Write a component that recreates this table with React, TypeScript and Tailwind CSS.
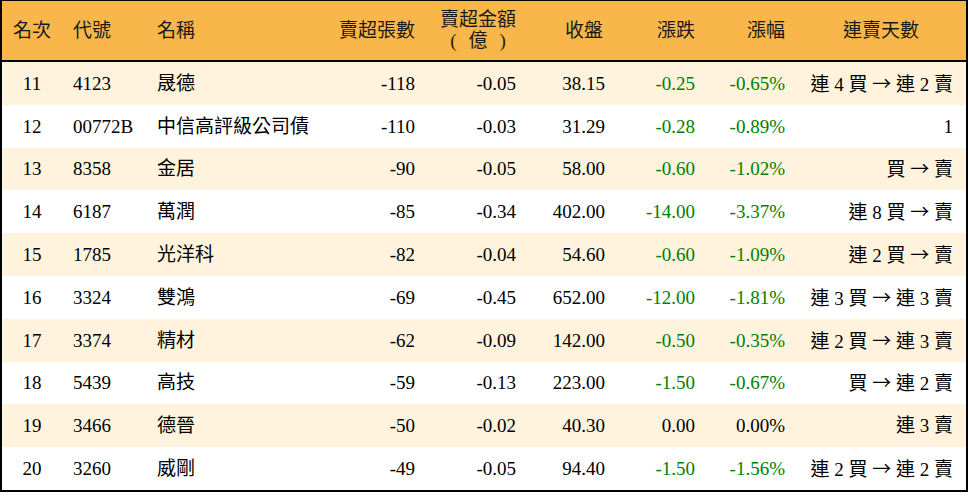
const rows = [
    ["11", "4123", "晟德", "-118", "-0.05", "38.15", "-0.25", "-0.65%", "連 4 買 → 連 2 賣"],
    ["12", "00772B", "中信高評級公司債", "-110", "-0.03", "31.29", "-0.28", "-0.89%", "1"],
    ["13", "8358", "金居", "-90", "-0.05", "58.00", "-0.60", "-1.02%", "買 → 賣"],
    ["14", "6187", "萬潤", "-85", "-0.34", "402.00", "-14.00", "-3.37%", "連 8 買 → 賣"],
    ["15", "1785", "光洋科", "-82", "-0.04", "54.60", "-0.60", "-1.09%", "連 2 買 → 賣"],
    ["16", "3324", "雙鴻", "-69", "-0.45", "652.00", "-12.00", "-1.81%", "連 3 買 → 連 3 賣"],
    ["17", "3374", "精材", "-62", "-0.09", "142.00", "-0.50", "-0.35%", "連 2 買 → 連 3 賣"],
    ["18", "5439", "高技", "-59", "-0.13", "223.00", "-1.50", "-0.67%", "買 → 連 2 賣"],
    ["19", "3466", "德晉", "-50", "-0.02", "40.30", "0.00", "0.00%", "連 3 賣"],
    ["20", "3260", "威剛", "-49", "-0.05", "94.40", "-1.50", "-1.56%", "連 2 買 → 連 2 賣"],
];

const grid =
    "grid grid-cols-[60px_84px_184px_96px_101px_89px_90px_90px_170px]";

const cjk = { fontFamily: '"Noto Sans CJK TC", sans-serif' };

const changeColor = (v: string) =>
    v.startsWith("-") ? "text-[#008000]" : "text-black";

// the arrow is drawn from the CJK font so it is full width, like the reference
function Streak({ text }: { text: string }) {
    const parts = text.split("→");
    return (
        <>
            {parts.map((p, i) => (
                <span key={i}>
                    {i > 0 && <span style={cjk}>→</span>}
                    {p}
                </span>
            ))}
        </>
    );
}

export default function App() {
    return (
        <div
            className="w-[968px] h-[496px] bg-white text-[19px] leading-none text-black"
            style={{ fontFamily: '"Liberation Serif", "Noto Sans CJK TC", serif' }}
        >
            <div className="w-[968px] border-l-2 border-r-2 border-t border-b-2 border-black">
                {/* Header */}
                <div className={`${grid} h-[61px] bg-[#F9B64B] border-b-2 border-black items-center text-[#1a1a1a]`}>
                    <div className="text-center">名次</div>
                    <div className="pl-[11px]">代號</div>
                    <div className="pl-[11px]">名稱</div>
                    <div className="text-right pr-[11px]">賣超張數</div>
                    <div className="flex justify-end pr-[11px]">
                        <div className="flex flex-col items-center gap-[1px]">
                            <div className="leading-[20px]">賣超金額</div>
                            <div className="flex items-center gap-[12px] leading-[20px]">
                                <span>(</span>
                                <span>億</span>
                                <span>)</span>
                            </div>
                        </div>
                    </div>
                    <div className="text-right pr-[13px]">收盤</div>
                    <div className="text-right pr-[11px]">漲跌</div>
                    <div className="text-right pr-[11px]">漲幅</div>
                    <div className="text-center pl-[13px] pr-[13px]">連賣天數</div>
                </div>

                {/* Rows */}
                {rows.map((r, i) => (
                    <div
                        key={r[0]}
                        className={`${grid} h-[42.8px] items-center ${
                            i % 2 === 0 ? "bg-[#FFF3DD]" : "bg-white"
                        }`}
                    >
                        <div className="text-center">{r[0]}</div>
                        <div className="pl-[11px]">{r[1]}</div>
                        <div className="pl-[11px] whitespace-nowrap">{r[2]}</div>
                        <div className="text-right pr-[11px]">{r[3]}</div>
                        <div className="text-right pr-[11px]">{r[4]}</div>
                        <div className="text-right pr-[11px]">{r[5]}</div>
                        <div className={`text-right pr-[11px] ${changeColor(r[6])}`}>{r[6]}</div>
                        <div className={`text-right pr-[11px] ${changeColor(r[7])}`}>{r[7]}</div>
                        <div className="text-right pr-[13px] whitespace-pre">
                            <Streak text={r[8]} />
                        </div>
                    </div>
                ))}
            </div>
        </div>
    );
}
